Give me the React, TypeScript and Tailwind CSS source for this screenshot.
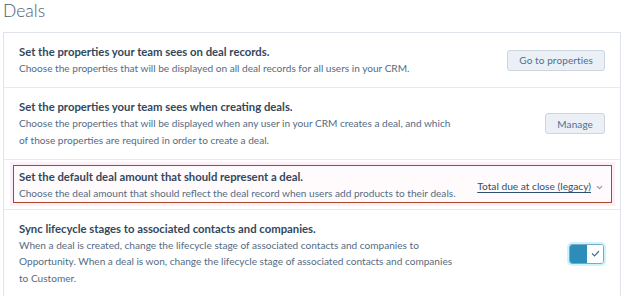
import { ChevronDown } from "lucide-react";

const font = "font-['Lato','Open_Sans',sans-serif]";

interface RowProps {
	title: string;
	lines: string[];
	children?: React.ReactNode;
}

const SettingText = ({ title, lines }: { title: string; lines: string[] }) => (
	<div className="flex flex-col whitespace-nowrap">
		<div className="text-[11.3px] leading-[16px] font-bold text-[#33475b]">{title}</div>
		{lines.map((line) => (
			<div key={line} className="text-[10.1px] leading-[16.3px] text-[#556b82]">
				{line}
			</div>
		))}
	</div>
);

const SettingRow = ({ title, lines, children }: RowProps) => (
	<div className="flex items-center justify-between border-b border-[#e5eaf0] pl-[15px] pr-[15px] py-[11px] last:border-b-0">
		<SettingText title={title} lines={lines} />
		{children}
	</div>
);

const GhostButton = ({ label }: { label: string }) => (
	<button className="h-[21px] px-[11px] rounded-[3px] border border-[#cbd6e2] bg-[#eaf0f6] text-[10px] text-[#506e91] leading-none tracking-[0.1px]">
		{label}
	</button>
);

const App = () => {
	return (
		<div className={`w-[624px] h-[296px] bg-white overflow-hidden ${font}`}>
			<h1 className="pl-[3px] h-[32px] text-[17.5px] leading-[22px] font-light text-[#4b5b6b]">Deals</h1>
			<div className="mx-[3px] border border-[#dfe3eb]">
				<SettingRow
					title="Set the properties your team sees on deal records."
					lines={["Choose the properties that will be displayed on all deal records for all users in your CRM."]}
				>
					<GhostButton label="Go to properties" />
				</SettingRow>
				<SettingRow
					title="Set the properties your team sees when creating deals."
					lines={[
						"Choose the properties that will be displayed when any user in your CRM creates a deal, and which",
						"of those properties are required in order to create a deal.",
					]}
				>
					<GhostButton label="Manage" />
				</SettingRow>
				<div className="border-b border-[#e5eaf0] pl-[9px] pr-[8px] pt-[5px] pb-[6px]">
					<div className="flex items-center justify-between border border-[#a9472b] bg-[#fffbfd] shadow-[0_0_0_3px_#fdeef7] pl-[5px] pr-[7px] pt-[3px] pb-[1px]">
						<SettingText
							title="Set the default deal amount that should represent a deal."
							lines={["Choose the deal amount that should reflect the deal record when users add products to their deals."]}
						/>
						<div className="flex items-center gap-[4px] pt-[4px] text-[10.2px] text-[#2f4f6c] whitespace-nowrap">
							<span className="underline underline-offset-2">Total due at close (legacy)</span>
							<ChevronDown className="w-[9px] h-[9px] text-[#7c98b6]" strokeWidth={3} />
						</div>
					</div>
				</div>
				<SettingRow
					title="Sync lifecycle stages to associated contacts and companies."
					lines={[
						"When a deal is created, change the lifecycle stage of associated contacts and companies to",
						"Opportunity. When a deal is won, change the lifecycle stage of associated contacts and companies",
						"to Customer.",
					]}
				>
					<div className="flex h-[20px] w-[35px] rounded-[3px] border border-[#7fa6c4] overflow-hidden shadow-[0_0_0_2px_#c9f5fc] mr-[1px]">
						<div className="w-[17px] bg-[#2b8db8]" />
						<div className="flex flex-1 items-center justify-center bg-white">
							<svg width="9" height="7" viewBox="0 0 9 7" fill="none">
								<path d="M1 3.5 L3.5 6 L8 1" stroke="#516f90" strokeWidth="1.2" />
							</svg>
						</div>
					</div>
				</SettingRow>
			</div>
		</div>
	);
};

export default App;
